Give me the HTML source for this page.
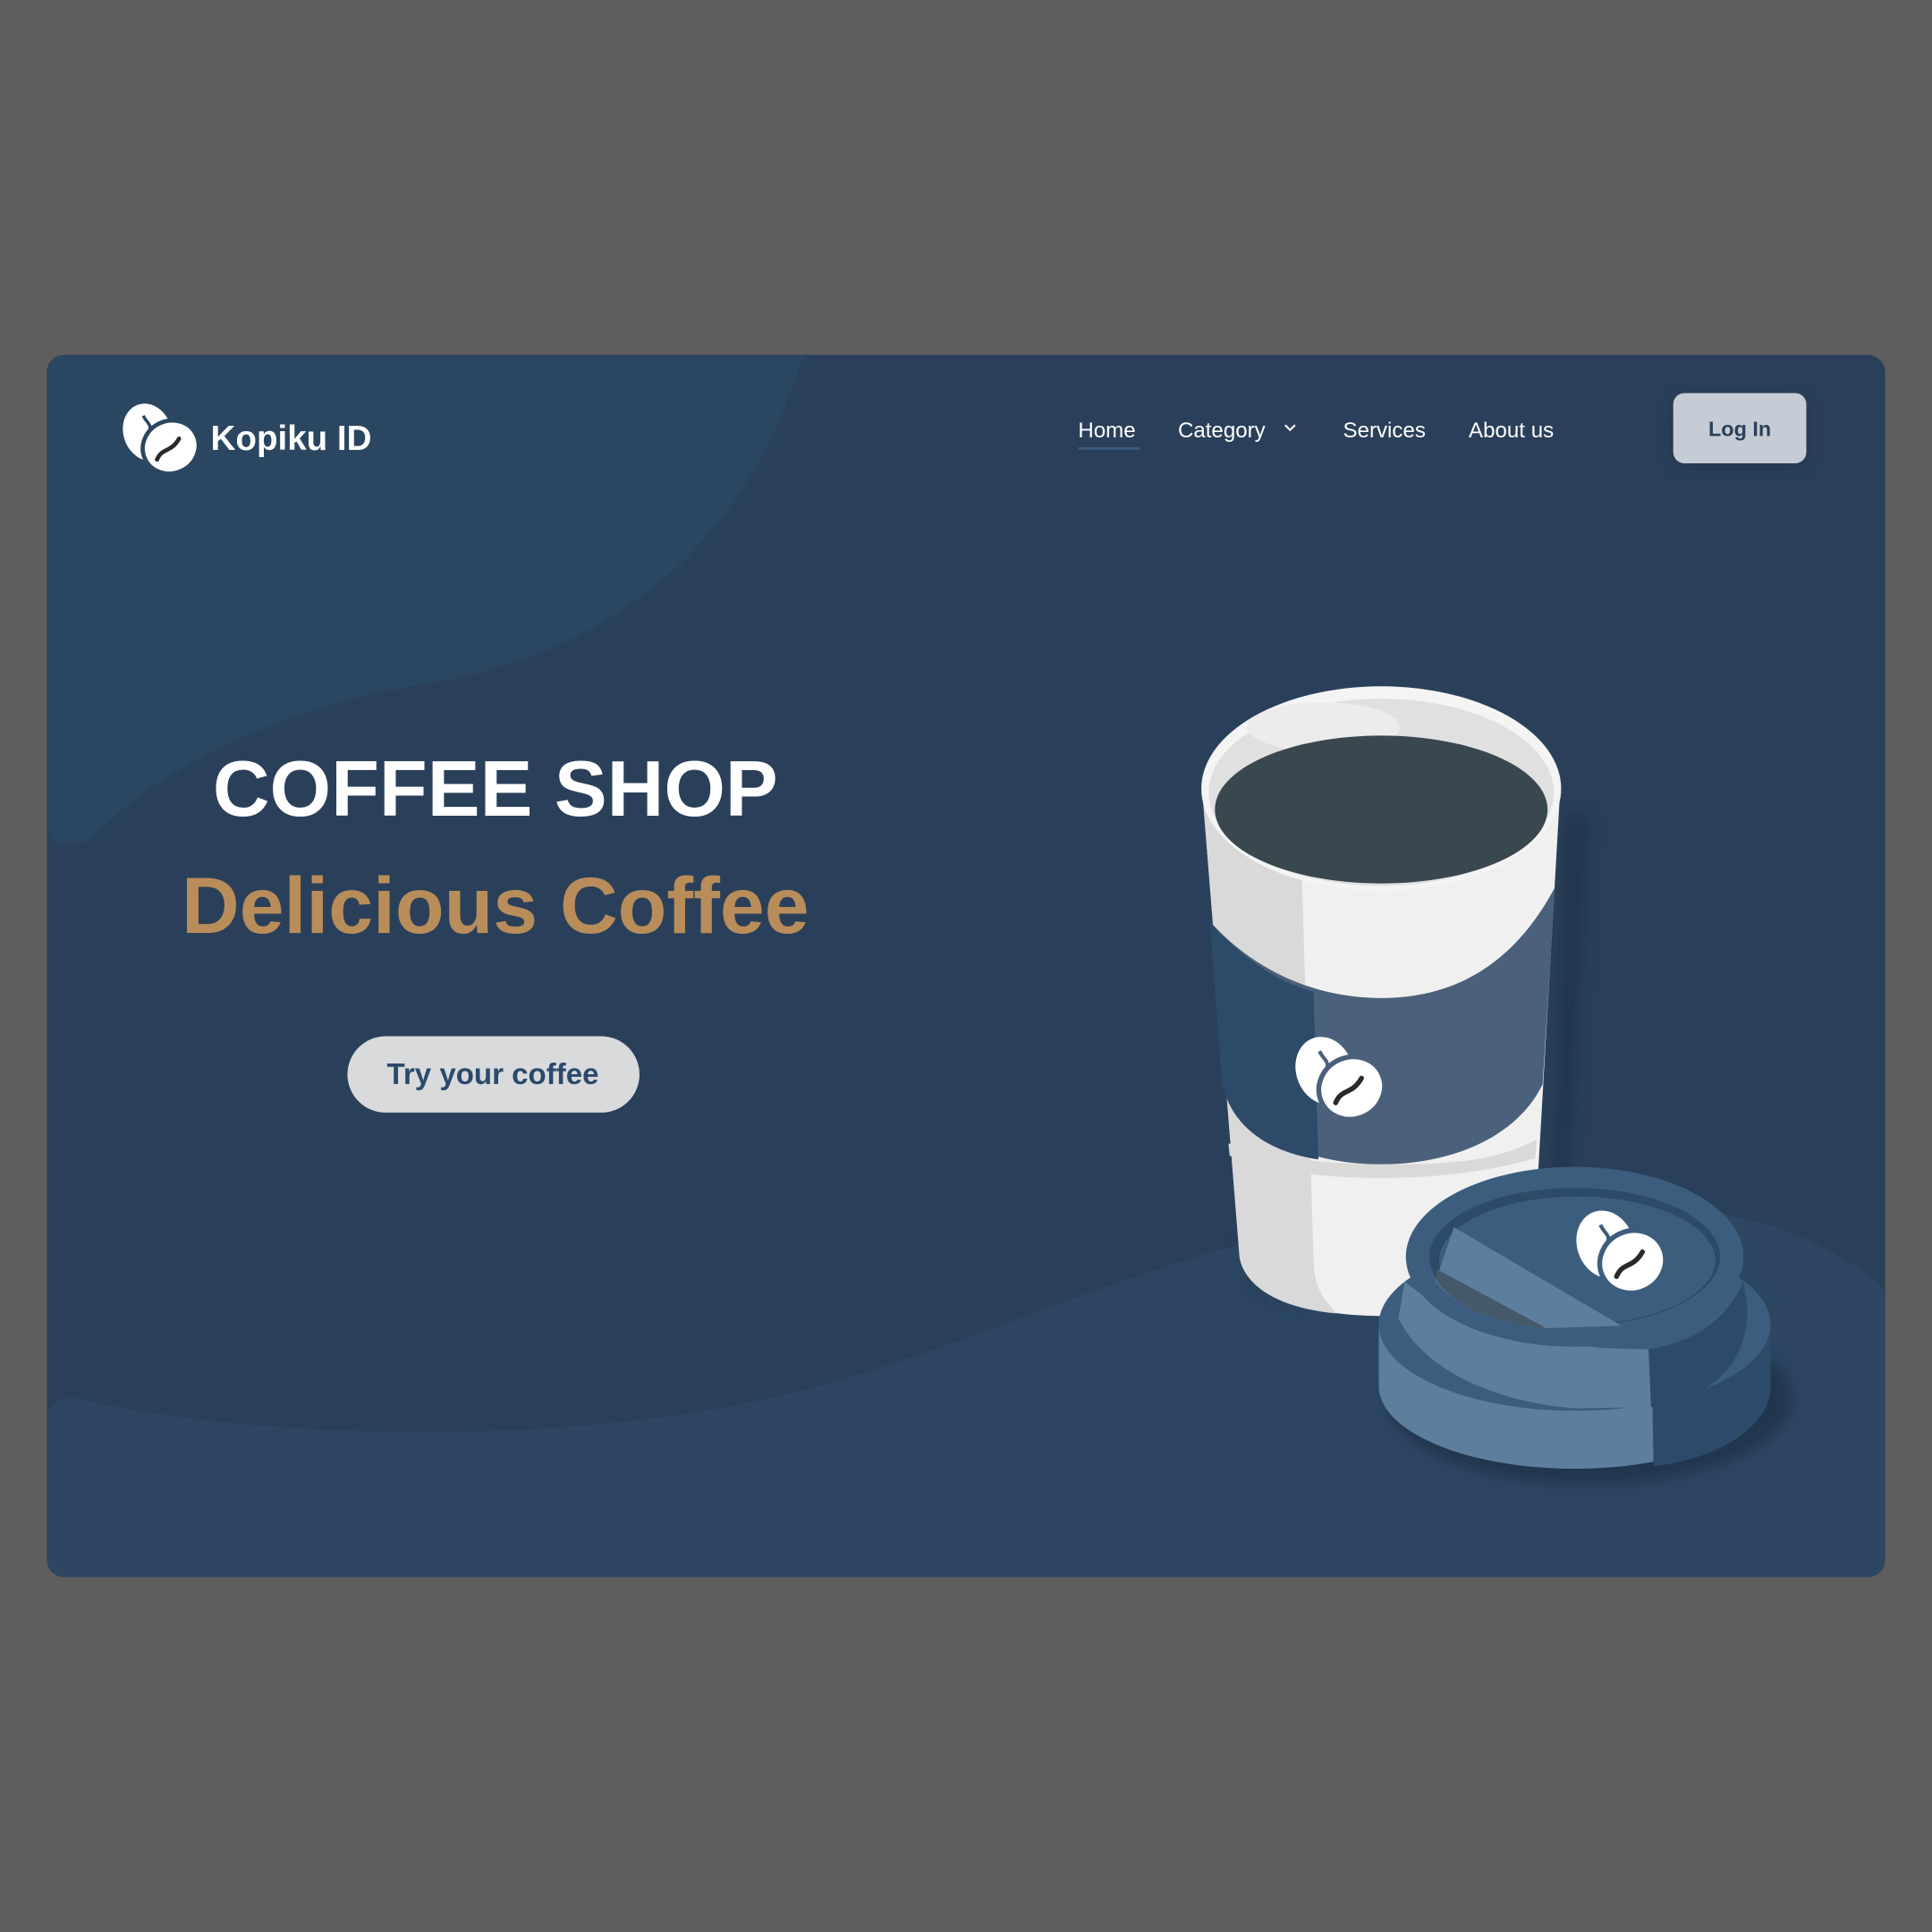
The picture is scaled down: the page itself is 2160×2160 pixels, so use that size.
<!DOCTYPE html>
<html><head><meta charset="utf-8"><style>
html,body{margin:0;padding:0;background:#5f5d5e;}
svg{display:block;}
</style></head><body>
<svg width="2160" height="2160" viewBox="0 0 1568 1568" xmlns="http://www.w3.org/2000/svg">
<defs>
<clipPath id="card"><rect x="38" y="288" width="1492" height="992" rx="14"/></clipPath>
<g id="bean">
  <ellipse cx="-12" cy="-6" rx="23" ry="28" transform="rotate(-20 -12 -6)" fill="#fff"/>
  <ellipse cx="10" cy="8" rx="27" ry="25" transform="rotate(-25 10 8)" fill="#fff" stroke="var(--bg)" stroke-width="4"/>
  <path d="M-3,20 C2,8 10,14 18,0" fill="none" stroke="#2a2a2a" stroke-width="4" stroke-linecap="round"/>
  <path d="M-16,-22 C-14,-16 -8,-14 -10,-8" fill="none" stroke="var(--bg)" stroke-width="3"/>
</g>
<filter id="sh" x="-20%" y="-20%" width="140%" height="140%"><feGaussianBlur stdDeviation="6"/></filter>
</defs>
<rect x="38" y="288" width="1492" height="992" rx="14" fill="#2a405a"/>
<g clip-path="url(#card)">
  <path d="M38,288 H652 C612,420 520,528 340,556 C220,576 125,628 80,675 C62,692 38,688 38,670 Z" fill="#2b4661"/>
  <path d="M38,1150 C40,1136 55,1132 75,1138 C200,1165 420,1175 600,1140 C750,1110 860,1050 1000,1012 C1150,972 1300,960 1420,990 C1480,1006 1530,1040 1530,1050 V1290 H38 Z" fill="#2d4763"/>
</g>
<!-- logo -->
<g transform="translate(130,356) scale(0.85)" style="--bg:#2b4661">
  <use href="#bean"/>
</g>
<text x="171" y="365" font-family="Liberation Sans, sans-serif" font-weight="bold" font-size="28" fill="#fff">Kopiku ID</text>
<g font-family="Liberation Sans, sans-serif" font-size="17.5" fill="#fff">
<text x="875" y="355">Home</text>
<text x="956" y="355">Category</text>
<text x="1090" y="355">Services</text>
<text x="1192" y="355">About us</text>
</g>
<path d="M1043,345 l4,4 l4,-4" fill="none" stroke="#fff" stroke-width="1.5"/>
<rect x="875" y="363" width="50" height="2" fill="#3b5d80"/>
<rect x="1358" y="322" width="108" height="57" rx="10" fill="#1d2c3e" opacity="0.5" filter="url(#sh)"/>
<rect x="1358" y="319" width="108" height="57" rx="9" fill="#c6ccd6"/>
<text x="1412" y="354" text-anchor="middle" font-family="Liberation Sans, sans-serif" font-weight="bold" font-size="17" fill="#2b4059">Log In</text>
<!-- hero text -->
<text x="402" y="662" text-anchor="middle" font-family="Liberation Sans, sans-serif" font-weight="bold" font-size="64" fill="#fff">COFFEE SHOP</text>
<text x="402" y="757" text-anchor="middle" font-family="Liberation Sans, sans-serif" font-weight="bold" font-size="65" fill="#b88d5a">Delicious Coffee</text>
<rect x="282" y="841" width="237" height="62" rx="31" fill="#d9dadc"/>
<text x="400" y="880" text-anchor="middle" font-family="Liberation Sans, sans-serif" font-weight="bold" font-size="24" fill="#2b4a6b">Try your coffee</text>
<!-- cup shadow -->
<path d="M1000,1000 C1010,1060 1060,1080 1130,1080 C1200,1080 1250,1060 1260,1000 L1270,660 L1290,660 L1270,1020 C1250,1090 1050,1100 1010,1040 Z" fill="#1f3148" opacity="0.7" filter="url(#sh)"/>
<!-- cup body -->
<path d="M976,645 L1006,1020 C1010,1050 1060,1068 1121,1068 C1182,1068 1240,1052 1245,1010 L1266,645 Z" fill="#f0f0f0"/>
<path d="M976,645 L1006,1020 C1010,1045 1040,1062 1085,1066 C1070,1050 1066,1040 1066,1020 L1055,660 Z" fill="#d9d9d9"/>
<!-- sleeve -->
<path d="M982,748 C1020,790 1070,810 1121,810 C1172,810 1225,790 1262,720 L1252,880 C1230,925 1175,945 1121,945 C1067,945 1010,925 992,880 Z" fill="#4b607a"/>
<path d="M982,748 C1010,780 1040,798 1066,805 L1070,941 C1030,935 1000,915 992,880 Z" fill="#2d4a69"/>
<path d="M998,938 C1030,950 1070,956 1121,956 C1172,956 1210,950 1246,940 L1247,925 C1210,944 1172,945 1121,945 C1070,945 1030,938 997,928 Z" fill="#d9d9d9"/>
<g transform="translate(1087,875)" style="--bg:#4b607a"><use href="#bean"/></g>
<!-- rim -->
<ellipse cx="1121" cy="640" rx="146" ry="83" fill="#f4f4f4"/>
<ellipse cx="1121" cy="643" rx="140" ry="76" fill="#e0e0e0"/>
<ellipse cx="1074" cy="590" rx="62" ry="20" fill="#ececec"/>
<ellipse cx="1121" cy="657" rx="135" ry="60" fill="#39474f"/>
<!-- lid shadow -->
<ellipse cx="1290" cy="1135" rx="165" ry="70" fill="#1d2e44" opacity="0.7" filter="url(#sh)"/>
<!-- lid flange -->
<path d="M1119,1075 V1125 A159,67 0 0 0 1437,1125 V1075 Z" fill="#5d7e9d"/>
<path d="M1340,1075 H1437 V1125 C1437,1160 1390,1185 1342,1190 Z" fill="#2e4a6a"/>
<ellipse cx="1278" cy="1075" rx="159" ry="70" fill="#3d5d7e"/>
<path d="M1135,1070 C1160,1120 1230,1140 1280,1143 L1340,1142 L1338,1095 C1290,1095 1200,1090 1140,1040 Z" fill="#5d7e9d"/>
<path d="M1338,1095 L1340,1142 C1390,1135 1420,1105 1418,1060 L1415,1040 C1400,1075 1370,1090 1338,1095 Z" fill="#2e4a6a"/>
<!-- lid top -->
<ellipse cx="1278" cy="1020" rx="137" ry="73" fill="#3d5d7e"/>
<ellipse cx="1278" cy="1020" rx="118" ry="56" fill="#2d4a69"/>
<ellipse cx="1280" cy="1023" rx="112" ry="52" fill="#3d5d7e"/>
<path d="M1180,996 L1316,1076 L1255,1078 C1215,1075 1180,1060 1165,1040 Z" fill="#5d7e9d"/>
<path d="M1166,1030 L1255,1078 C1215,1075 1180,1060 1166,1040 Z" fill="#45596a"/>
<g transform="translate(1315,1016)" style="--bg:#3d5d7e"><use href="#bean"/></g>
</svg>
</body></html>
